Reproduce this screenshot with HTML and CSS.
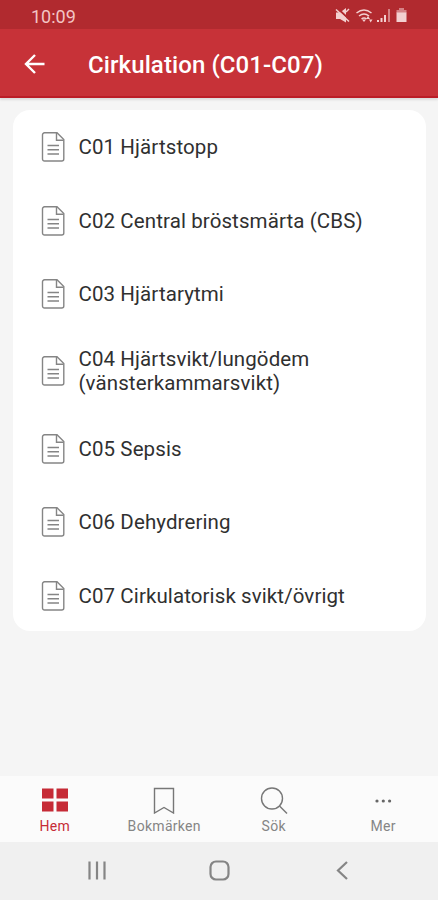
FILE: index.html
```html
<!DOCTYPE html>
<html lang="sv">

<head>
    <meta charset="UTF-8">
    <meta name="viewport" content="width=device-width, initial-scale=1.0">
    <title>Cirkulation (C01-C07)</title>
    <link rel="stylesheet" href="styles.css">
</head>

<body>
    <!-- document icon, shared by all rows -->
    <svg class="defs" width="0" height="0">
        <symbol id="doc" viewBox="0 0 24 32">
            <path d="M3.500 1.800H16L22.800 8.500V28a2 2 0 0 1-2 2H3.500a2 2 0 0 1-2-2V3.800a2 2 0 0 1 2-2Z" />
            <path d="M15.500 2V9.300H22.500M6.500 14.500H18M6.500 18.800H18M6.500 23H18" />
        </symbol>
    </svg>

    <div class="status">
        <span class="time">10:09</span>
        <svg class="status-icons" width="76" height="18" viewBox="0 0 76 18">
            <path d="M1 5.500h4l6-4.500v14.500L5 12H1z" />
            <path d="M11 5l3-3" class="line" />
            <path d="M1 0L15 13" class="cut" />
            <path d="M1 2.500L14 14.500" class="line" />
            <path d="M21.500 6Q29 0 36.500 6M24 9Q29 5 34 9M26.500 12Q29 10 31.500 12" class="line" />
            <path d="M27 12.500h4L29 15zM31 12l2-3 2 3zM34 12.500h3.500L35.700 15.500z" />
            <path d="M42 13h2v2h-2zM45.500 11h2v4h-2zM49 8h2v7h-2z" />
            <path d="M53 2h2v13h-2z" class="dim" />
            <path d="M64 1h5v2h-5zM61.500 3h10v3h-10z" class="dim" />
            <path d="M61.500 5.500h10V15h-10z" />
        </svg>
    </div>

    <header>
        <svg class="back" width="22" height="22" viewBox="0 0 22 22">
            <path d="M20.500 11H2.500M11 2L2 11l9 9" />
        </svg>
        <h1>Cirkulation (C01-C07)</h1>
    </header>

    <main>
        <ul class="list">
            <li><svg class="doc"><use href="#doc" /></svg><span>C01 Hjärtstopp</span></li>
            <li><svg class="doc"><use href="#doc" /></svg><span>C02 Central bröstsmärta (CBS)</span></li>
            <li><svg class="doc"><use href="#doc" /></svg><span>C03 Hjärtarytmi</span></li>
            <li class="tall"><svg class="doc"><use href="#doc" /></svg><span>C04 Hjärtsvikt/lungödem<br>(vänsterkammarsvikt)</span></li>
            <li><svg class="doc"><use href="#doc" /></svg><span>C05 Sepsis</span></li>
            <li><svg class="doc"><use href="#doc" /></svg><span>C06 Dehydrering</span></li>
            <li><svg class="doc"><use href="#doc" /></svg><span>C07 Cirkulatorisk svikt/övrigt</span></li>
        </ul>
    </main>

    <nav class="tabs">
        <a class="tab active">
            <svg width="28" height="28" viewBox="0 0 28 28">
                <path d="M1 2.500h11.500v10H1zM15.500 2.500H27v10H15.500zM1 15.500h11.500v10H1zM15.500 15.500H27v10H15.500z" />
            </svg>
            <span>Hem</span>
        </a>
        <a class="tab">
            <svg width="28" height="28" viewBox="0 0 28 28">
                <path d="M4.500 2.500h19V27L14 21.500l-9.500 5.500z" />
            </svg>
            <span>Bokmärken</span>
        </a>
        <a class="tab">
            <svg width="28" height="28" viewBox="0 0 28 28">
                <circle cx="12" cy="12.500" r="10.500" />
                <path d="M19.500 20L27 27.500" />
            </svg>
            <span>Sök</span>
        </a>
        <a class="tab more">
            <svg width="28" height="28" viewBox="0 0 28 28">
                <circle cx="8" cy="15" r="1.600" />
                <circle cx="14.300" cy="15" r="1.600" />
                <circle cx="20.600" cy="15" r="1.600" />
            </svg>
            <span>Mer</span>
        </a>
    </nav>

    <div class="system">
        <svg width="24" height="24" viewBox="0 0 24 24">
            <path d="M4.500 3.500v18M12 3.500v18M19.500 3.500v18" />
        </svg>
        <svg width="24" height="24" viewBox="0 0 24 24">
            <rect x="2.500" y="3.500" width="18" height="18" rx="5.500" />
        </svg>
        <svg width="24" height="24" viewBox="0 0 24 24">
            <path d="M16 4L7 12.500l9 8.500" />
        </svg>
    </div>
</body>

</html>
```
FILE: styles.css
```css
* {
    box-sizing: border-box;
    margin: 0;
    padding: 0;
    font-family: Roboto, sans-serif;
}

body {
    display: flex;
    flex-direction: column;
    height: 900px;
    background-color: #f5f5f5;
    overflow: hidden;
}

svg {
    flex: none;
    fill: none;
}

.defs {
    display: none;
}

.status {
    display: flex;
    justify-content: space-between;
    align-items: center;
    height: 29px;
    padding: 3px 27px 0 31px;
    background-color: #b12a2f;
    color: #f3c5c5;
}

.time {
    font-size: 18px;
}

.status-icons {
    fill: #f3d0d0;
}

.status-icons .line {
    fill: none;
    stroke: #f3d0d0;
    stroke-width: 1.5;
}

.status-icons .cut {
    stroke: #b12a2f;
    stroke-width: 2;
}

.status-icons .dim {
    fill: #d58286;
}

header {
    display: flex;
    align-items: center;
    height: 69px;
    padding: 3px 0 0 24px;
    background-color: #c73238;
    border-bottom: 2px solid #bb1d27;
    box-shadow: 0 2px 2px #dcdcdc;
}

.back {
    stroke: white;
    stroke-width: 2.4;
}

h1 {
    margin-left: 42px;
    padding-top: 1px;
    color: white;
    font-size: 24px;
    font-weight: 500;
    letter-spacing: 0.1px;
}

main {
    flex: 1;
    padding: 12px 12.5px;
}

.list {
    height: 521px;
    background-color: white;
    border-radius: 17px;
    list-style: none;
}

li {
    display: flex;
    align-items: center;
    height: 73.4px;
    padding: 1px 0 0 28px;
    color: #303030;
    font-size: 20.5px;
    line-height: 24px;
    letter-spacing: 0.1px;
}

.tall {
    height: 81.6px;
}

.doc {
    width: 24px;
    height: 32px;
    margin-right: 14px;
    stroke: #858585;
    stroke-width: 1.4;
}

.tabs {
    display: flex;
    height: 66px;
    background-color: #fbfbfb;
}

.tab {
    display: flex;
    flex: 1;
    flex-direction: column;
    align-items: center;
    gap: 4px;
    padding-top: 10px;
    color: #858585;
    font-size: 14px;
    line-height: 16px;
    letter-spacing: 0.3px;
    stroke: #777;
    stroke-width: 1.4;
}

.active {
    color: #c62b36;
    stroke: none;
}

.active svg {
    fill: #c62b36;
}

.more svg {
    fill: #666;
    stroke: none;
}

.system {
    display: flex;
    justify-content: space-between;
    height: 58px;
    padding: 16px 83px 0 85px;
    background-color: #f0f0f0;
    stroke: #858585;
    stroke-width: 2.2;
}
```
